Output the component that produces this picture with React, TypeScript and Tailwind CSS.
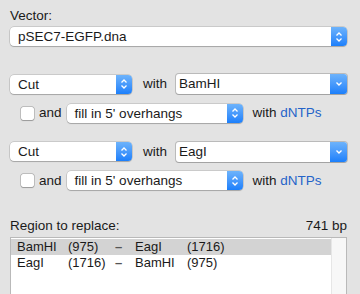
import React from "react"

const font = { fontFamily: '"Liberation Sans", Arial, sans-serif' }

function Stepper() {
  return (
    <div className="flex w-[16px] self-stretch items-center justify-center rounded-r-[4px] bg-gradient-to-b from-[#6db3fb] to-[#1a7ffb]">
      <svg width="8" height="12" viewBox="0 0 8 12" fill="none" stroke="white" strokeWidth="1.3">
        <path d="M1.5 4.5 L4 2 L6.5 4.5" />
        <path d="M1.5 7.5 L4 10 L6.5 7.5" />
      </svg>
    </div>
  )
}

function Popup({ label, className }: { label: string; className: string }) {
  return (
    <div className={`flex h-[19px] items-stretch rounded-[4px] bg-white shadow-[0_0_0_0.5px_rgba(0,0,0,0.22),0_1px_1px_rgba(0,0,0,0.18)] ${className}`}>
      <span className="flex-1 pl-[8px] text-[13.5px] leading-[19px] text-[#1a1a1a]">{label}</span>
      <Stepper />
    </div>
  )
}

function Combo({ label }: { label: string }) {
  return (
    <div className="flex h-[20px] flex-1 items-stretch rounded-[3px] bg-white shadow-[0_0_0_1px_rgba(0,0,0,0.18),0_1px_0.5px_rgba(0,0,0,0.12)]">
      <span className="flex-1 pl-[3px] text-[13.5px] leading-[20px] text-[#1a1a1a]">{label}</span>
      <div className="flex w-[17px] items-center justify-center rounded-r-[3px] bg-gradient-to-b from-[#6db3fb] to-[#1a7ffb]">
        <svg width="8" height="6" viewBox="0 0 8 6" fill="none" stroke="white" strokeWidth="1.4">
          <path d="M1.5 1.5 L4 4 L6.5 1.5" />
        </svg>
      </div>
    </div>
  )
}

function CutBlock({ enzyme }: { enzyme: string }) {
  return (
    <div className="flex flex-col">
      <div className="flex items-center">
        <Popup label="Cut" className="w-[122px]" />
        <span className="ml-[11px] mr-[9px] text-[13.5px]">with</span>
        <Combo label={enzyme} />
      </div>
      <div className="mt-[9px] flex items-center pl-[11px]">
        <div className="h-[13px] w-[13px] rounded-[2px] bg-white shadow-[0_0_0_0.5px_rgba(0,0,0,0.3),0_0.5px_1px_rgba(0,0,0,0.2)]" />
        <span className="ml-[5px] mr-[5px] text-[13.5px]">and</span>
        <Popup label="fill in 5' overhangs" className="w-[176px]" />
        <span className="ml-[10px] text-[13.5px]">
          with <span className="text-[#2563c9]">dNTPs</span>
        </span>
      </div>
    </div>
  )
}

export default function App() {
  const rows = [
    ["BamHI", "(975)", "EagI", "(1716)"],
    ["EagI", "(1716)", "BamHI", "(975)"],
  ]
  return (
    <div style={font} className="h-[294px] w-[360px] overflow-hidden bg-[#e3e3e3] pl-[10px] pr-[13px] text-[#1a1a1a]">
      <p className="pt-[8px] text-[13.5px] leading-[16px]">Vector:</p>
      <Popup label="pSEC7-EGFP.dna" className="mt-[3px]" />
      <div className="mt-[28px]">
        <CutBlock enzyme="BamHI" />
      </div>
      <div className="mt-[18px]">
        <CutBlock enzyme="EagI" />
      </div>
      <div className="mt-[27px] flex justify-between text-[13.5px] leading-[16px]">
        <span>Region to replace:</span>
        <span>741 bp</span>
      </div>
      <div className="mt-[3px] flex h-[80px] border border-[#b9b9b9] bg-white">
        <div className="flex-1 pt-[1px]">
          {rows.map((r, i) => (
            <div key={i} className={`flex h-[16px] items-center text-[13px] ${i === 0 ? "bg-[#d3d3d3]" : ""}`}>
              <span className="w-[57px] pl-[6px]">{r[0]}</span>
              <span className="w-[47px]">{r[1]}</span>
              <span className="w-[20px] font-bold text-[#555]">–</span>
              <span className="w-[52px]">{r[2]}</span>
              <span>{r[3]}</span>
            </div>
          ))}
        </div>
        <div className="w-[15px] border-l border-[#e6e6e6] bg-[#f7f7f7]" />
      </div>
    </div>
  )
}
